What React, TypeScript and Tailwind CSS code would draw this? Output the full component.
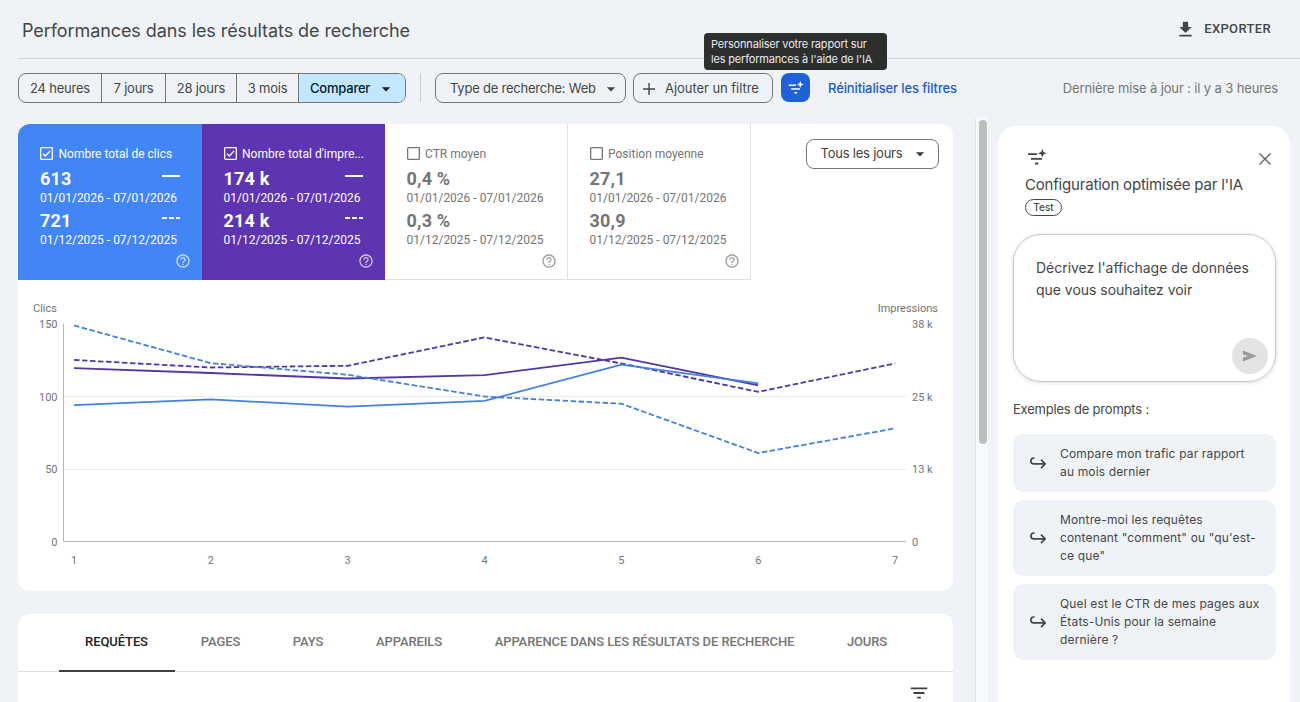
import { MdArrowDropDown, MdFileDownload, MdFilterList, MdHelpOutline } from "react-icons/md";

const ranges = [
  { label: "24 heures", className: "w-[83px]" },
  { label: "7 jours", className: "w-[64px]" },
  { label: "28 jours", className: "w-[71px]" },
  { label: "3 mois", className: "w-[62px]" },
];

const metrics = [
  {
    name: "Nombre total de clics",
    current: "613",
    previous: "721",
    checked: true,
    className: "w-[183.5px] pr-[11px] bg-[#4285f4] text-white",
  },
  {
    name: "Nombre total d'impre...",
    current: "174 k",
    previous: "214 k",
    checked: true,
    className: "w-[183px] pr-[11px] bg-[#5e35b1] text-white",
  },
  {
    name: "CTR moyen",
    current: "0,4 %",
    previous: "0,3 %",
    checked: false,
    className: "w-[183px] pr-[10px] border-r border-b border-[#e0e0e0] text-[#757575]",
  },
  {
    name: "Position moyenne",
    current: "27,1",
    previous: "30,9",
    checked: false,
    className: "w-[183px] pr-[10px] border-r border-b border-[#e0e0e0] text-[#757575]",
  },
];

const clicks = [94, 98, 93, 97, 122, 109];
const previousClicks = [149, 123, 115, 100, 95, 61, 78];
const impressions = [29.9, 29.05, 28.1, 28.7, 31.7, 26.9];
const previousImpressions = [31.3, 30, 30.3, 35.2, 30.7, 25.8, 30.7];

const tabs = [
  { label: "REQUÊTES", className: "w-[116px]" },
  { label: "PAGES", className: "w-[92px]" },
  { label: "PAYS", className: "w-[83px]" },
  { label: "APPAREILS", className: "w-[119px]" },
  { label: "APPARENCE DANS LES RÉSULTATS DE RECHERCHE", className: "w-[352px]" },
  { label: "JOURS", className: "w-[93px]" },
];

const prompts = [
  { lines: ["Compare mon trafic par rapport", "au mois dernier"], className: "h-[58px]" },
  {
    lines: ["Montre-moi les requêtes", 'contenant "comment" ou "qu\'est-', 'ce que"'],
    className: "h-[76px]",
  },
  {
    lines: ["Quel est le CTR de mes pages aux", "États-Unis pour la semaine", "dernière ?"],
    className: "h-[76px]",
  },
];

const SparkFilter = ({ className }: { className: string }) => (
  <svg viewBox="0 0 20 16" className={className} fill="currentColor">
    <path d="M1 4.3h9v1.8H1zM4 9h11v1.8H4zM8 13.6h3.4v1.8H8z" />
    <path d="M15.3 0l1.2 3.1L19.6 4.3l-3.1 1.2-1.2 3.1-1.2-3.1L11 4.3l3.1-1.2z" />
  </svg>
);

const Checkbox = ({ checked }: { checked: boolean }) => (
  <svg viewBox="0 0 13 13" className="h-[13px] w-[13px] shrink-0" fill="none" stroke="currentColor">
    <rect x="0.65" y="0.65" width="11.7" height="11.7" rx="0.8" strokeWidth="1.3" />
    {checked && <path d="M3 6.7l2.3 2.3L10.1 4" strokeWidth="1.3" />}
  </svg>
);

const Header = () => (
  <header className="ml-[18px] flex h-[59px] items-center justify-between border-b border-[#d3d6db] pr-[29px] pl-1">
    <h1 className="pt-[3px] text-[18px] tracking-[-0.08px] text-[#444746]">
      Performances dans les résultats de recherche
    </h1>
    <button className="flex items-center gap-[8px] font-[Roboto] text-[13px] font-medium tracking-[0.35px] text-[#444746]">
      <MdFileDownload className="h-[21px] w-[21px]" />
      EXPORTER
    </button>
  </header>
);

const Toolbar = () => (
  <div className="flex h-[59px] items-start pt-[14px] pl-[18px] text-[13px] tracking-[-0.22px] text-[#444746]">
    <div className="flex h-[30px] w-[388px] overflow-hidden rounded-lg border border-[#747775]">
      {ranges.map((range) => (
        <button
          key={range.label}
          className={`border-r border-[#747775] pt-px whitespace-nowrap ${range.className}`}
        >
          {range.label}
        </button>
      ))}
      <button className="flex flex-1 items-center bg-[#c2e7ff] pt-px pl-[11px] font-medium text-[#001d35]">
        <span className="w-[66px] text-left">Comparer</span>
        <MdArrowDropDown className="h-5 w-5" />
      </button>
    </div>
    <div className="ml-[14px] h-[29px] w-px bg-[#c7cacf]" />
    <button className="ml-[14px] flex h-[30px] w-[191px] items-center rounded-lg border border-[#747775] pt-px pl-[14px]">
      <span className="w-[151px] text-left whitespace-nowrap">Type de recherche: Web</span>
      <MdArrowDropDown className="h-5 w-5" />
    </button>
    <button className="ml-[7px] flex h-[30px] w-[140px] items-center gap-[10px] rounded-lg border border-[#747775] pt-px pl-[9px]">
      <svg viewBox="0 0 12 12" className="h-3 w-3" stroke="currentColor" strokeWidth="1.4">
        <path d="M6 0v12M0 6h12" />
      </svg>
      <span className="tracking-[-0.05px] whitespace-nowrap">Ajouter un filtre</span>
    </button>
    <div className="relative ml-[8px]">
      <button className="flex h-[29px] w-[29px] items-center justify-center rounded-lg bg-[#1f62d8] text-white">
        <SparkFilter className="h-[13px] w-4" />
      </button>
      <div className="absolute top-[-40px] left-[-77px] h-[37px] w-[183px] rounded bg-[#2d2e2e] pt-[4px] pl-[7px] text-[11px] leading-[14.5px] tracking-[-0.18px] whitespace-nowrap text-[#e8eaed]">
        <p>Personnaliser votre rapport sur</p>
        <p>les performances à l'aide de l'IA</p>
      </div>
    </div>
    <a className="ml-[18px] pt-[5.5px] font-medium tracking-[-0.12px] whitespace-nowrap text-[#1a5bc4]">
      Réinitialiser les filtres
    </a>
    <span className="mr-[22px] ml-auto pt-[5.5px] tracking-[-0.13px] whitespace-nowrap text-[#747775]">
      Dernière mise à jour : il y a 3 heures
    </span>
  </div>
);

const MetricCard = ({ metric }: { metric: (typeof metrics)[number] }) => (
  <div className={`h-[156px] pt-[22px] pl-[22px] font-[Roboto] ${metric.className}`}>
    <div className="flex h-[15px] items-center gap-[5.5px] text-[12px] whitespace-nowrap">
      <Checkbox checked={metric.checked} />
      {metric.name}
    </div>
    <div className="mt-[7px] flex h-[21px] justify-between pr-[10.5px] text-[18px] leading-[21px] font-bold tracking-[0.2px]">
      {metric.current}
      {metric.checked && <div className="mt-[7px] h-[2px] w-[18px] bg-white" />}
    </div>
    <p className="h-[21px] pt-px text-[12px] leading-[16px] whitespace-nowrap">
      01/01/2026 - 07/01/2026
    </p>
    <div className="flex h-[21px] justify-between pr-[10.5px] text-[18px] leading-[21px] font-bold tracking-[0.2px]">
      {metric.previous}
      {metric.checked && (
        <div className="mt-[7px] flex w-[18px] gap-[2px]">
          <div className="h-[2px] w-[5px] bg-white" />
          <div className="h-[2px] w-[5px] bg-white" />
          <div className="h-[2px] w-[4px] bg-white" />
        </div>
      )}
    </div>
    <p className="pt-px text-[12px] leading-[16px] whitespace-nowrap">
      01/12/2025 - 07/12/2025
    </p>
    <MdHelpOutline className="mt-[5px] ml-auto h-4 w-4 opacity-70" />
  </div>
);

const toPoints = (values: number[], max: number) =>
  values.map((value, i) => `${56 + i * 136.85},${261.5 - (value / max) * 217.5}`).join(" ");

const Chart = () => (
  <svg viewBox="0 0 935 311" className="h-[311px] w-[935px] font-[Roboto] text-[11px]" fill="none">
    <g fill="#757575">
      <text x="15" y="32">Clics</text>
      <text x="920" y="32" textAnchor="end">Impressions</text>
      {["150", "100", "50", "0"].map((label, i) => (
        <text key={label} x="39.5" y={48 + i * 72.5} textAnchor="end">
          {label}
        </text>
      ))}
      {["38 k", "25 k", "13 k", "0"].map((label, i) => (
        <text key={label} x="894" y={48 + i * 72.5}>
          {label}
        </text>
      ))}
      {[1, 2, 3, 4, 5, 6, 7].map((day, i) => (
        <text key={day} x={56 + i * 136.85} y="284" textAnchor="middle">
          {day}
        </text>
      ))}
    </g>
    <path d="M46 116.5H888M46 189.5H888" stroke="#ebebeb" />
    <path d="M45.5 44V261.5H888" stroke="#b4b4b4" />
    <g strokeWidth="1.8">
      <polyline points={toPoints(impressions, 37.5)} stroke="#5236a5" />
      <polyline points={toPoints(previousImpressions, 37.5)} stroke="#5236a5" strokeDasharray="5.5 2.5" />
      <polyline points={toPoints(clicks, 150)} stroke="#4481dc" />
      <polyline points={toPoints(previousClicks, 150)} stroke="#4481dc" strokeDasharray="5.5 2.5" />
    </g>
  </svg>
);

const Report = () => (
  <main className="w-[975px] pt-[6px] pl-[18px]">
    <section className="h-[467px] w-[935px] overflow-hidden rounded-xl bg-white">
      <div className="flex">
        {metrics.map((metric) => (
          <MetricCard key={metric.name} metric={metric} />
        ))}
        <button className="mt-[15px] ml-[55px] flex h-[30px] w-[133px] items-center rounded-lg border border-[#747775] pl-[14px] text-[13px] tracking-[-0.22px] text-[#3c4043]">
          <span className="w-[89px] text-left whitespace-nowrap">Tous les jours</span>
          <MdArrowDropDown className="h-5 w-5" />
        </button>
      </div>
      <Chart />
    </section>
    <section className="mt-[23px] h-[100px] w-[935px] rounded-t-xl bg-white">
      <div className="flex h-[58px] border-b border-[#e0e0e0] pl-[40.5px] font-[Roboto] text-[13px] font-medium tracking-[-0.1px]">
        {tabs.map((tab, i) => (
          <button
            key={tab.label}
            className={`h-[58px] border-b-2 whitespace-nowrap ${tab.className} ${
              i === 0 ? "border-[#3c4043] text-[#202124]" : "border-transparent text-[#757575]"
            }`}
          >
            {tab.label}
          </button>
        ))}
      </div>
      <MdFilterList className="mt-[10px] mr-[23px] ml-auto h-[22px] w-[22px] text-[#3c4043]" />
    </section>
  </main>
);

const Assistant = () => (
  <aside className="mt-2 ml-[10px] h-[600px] w-[292px] rounded-t-[18px] bg-white px-[15px] text-[#444746]">
    <div className="flex h-[46px] items-end justify-between pr-[4px] pl-[14px]">
      <SparkFilter className="mb-[7px] h-[16px] w-5" />
      <svg viewBox="0 0 12 12" className="mb-[7px] h-3 w-3" stroke="#5f6368" strokeWidth="1.4">
        <path d="M0.5 0.5l11 11M11.5 0.5l-11 11" />
      </svg>
    </div>
    <h2 className="h-[27px] pt-[2px] pl-[12px] text-[15px] leading-[21px] tracking-[-0.19px] whitespace-nowrap">
      Configuration optimisée par l'IA
    </h2>
    <span className="ml-[12px] flex h-[17px] w-[37px] items-center justify-center rounded-full border border-[#444746] text-[10px] font-medium">
      Test
    </span>
    <div className="mt-[18px] flex h-[148px] w-[263px] flex-col justify-between rounded-[28px] border border-[#c4c7c5] pt-[22px] pr-[7px] pb-[7px] pl-[22px] shadow-[0_1px_4px_rgba(0,0,0,0.14)]">
      <div className="text-[14px] leading-[22px] tracking-[-0.03px] whitespace-nowrap">
        <p>Décrivez l'affichage de données</p>
        <p>que vous souhaitez voir</p>
      </div>
      <button className="flex h-9 w-9 items-center justify-center self-end rounded-full bg-[#e3e3e3]">
        <svg viewBox="0 0 14 12" className="h-3 w-[14px]" fill="#9a9a9a">
          <path d="M0 0.5L14 6 0 11.5V7.4L5.2 6 0 4.6z" />
        </svg>
      </button>
    </div>
    <h3 className="mt-[17px] text-[13px] leading-[20px] tracking-[-0.2px] whitespace-nowrap">
      Exemples de prompts :
    </h3>
    <div className="mt-[15px] flex flex-col gap-2">
      {prompts.map((prompt) => (
        <button
          key={prompt.lines[0]}
          className={`flex w-[263px] items-center rounded-[10px] bg-[#eff3f8] pl-[17px] text-left text-[12px] leading-[18.3px] tracking-[0.15px] ${prompt.className}`}
        >
          <svg viewBox="0 0 16 12" className="mr-[14px] h-3 w-4" fill="none" stroke="currentColor" strokeWidth="1.7">
            <path d="M4.5 1H3.8a2.8 2.8 0 0 0 0 5.9H15M11 2.6l4.2 4.3L11 11.2" />
          </svg>
          <span className="whitespace-nowrap">
            {prompt.lines.map((line) => (
              <span key={line} className="block">
                {line}
              </span>
            ))}
          </span>
        </button>
      ))}
    </div>
  </aside>
);

const App = () => {
  return (
    <div className="h-[702px] w-[1300px] overflow-hidden bg-[#eff3f8] font-[Inter,sans-serif]">
      <Header />
      <Toolbar />
      <div className="flex">
        <Report />
        <div className="h-[584px] w-[13px] border-l border-[#e2e5e8] bg-[#f8f9fa] pt-[2px] pl-[3px]">
          <div className="h-[324px] w-[8px] rounded-full bg-[#bdbebe]" />
        </div>
        <Assistant />
      </div>
    </div>
  );
};

export default App;
